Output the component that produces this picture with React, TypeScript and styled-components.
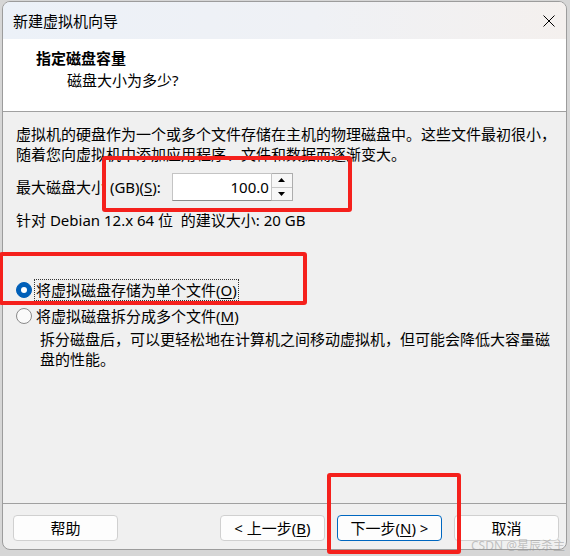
import React from "react";
import styled, { createGlobalStyle } from "styled-components";

const Global = createGlobalStyle`
  html, body { margin: 0; padding: 0; background: #d6d6d6; }
  body {
    font-family: "Noto Sans", "Noto Sans CJK SC", sans-serif;
    font-size: 15px;
    color: #000;
  }
  * { box-sizing: border-box; }
`;

const Stage = styled.div`
  position: relative;
  width: 570px;
  height: 556px;
  padding: 1px 0 0 2px;
  overflow: hidden;
`;

const Window = styled.div`
  width: 565px;
  height: 549px;
  border: 1px solid #9c9c9c;
  border-radius: 8px;
  background: #f0f0f0;
  display: flex;
  flex-direction: column;
  overflow: hidden;
`;

const TitleBar = styled.div`
  height: 37px;
  flex: none;
  display: flex;
  align-items: center;
  justify-content: space-between;
  padding: 0 11px 0 10px;
  background: linear-gradient(90deg, #ecf1f8 0%, #eff1f5 55%, #f4f0ee 100%);
`;

const TitleText = styled.div`
  font-size: 15px;
  line-height: 20px;
  color: #000;
`;

const CloseIcon = styled.svg`
  width: 12px;
  height: 12px;
  display: block;
`;

const Header = styled.div`
  height: 73px;
  flex: none;
  background: #fff;
  border-bottom: 1px solid #a0a0a0;
  padding: 9px 0 0 33px;
  display: flex;
  flex-direction: column;
  gap: 2px;
`;

const HeaderTitle = styled.div`
  font-weight: 700;
  font-size: 15px;
  line-height: 20px;
`;

const HeaderSub = styled.div`
  font-size: 15px;
  line-height: 20px;
  padding-left: 31px;
`;

const Body = styled.div`
  flex: 1;
  padding: 12px 0 0 13px;
  display: flex;
  flex-direction: column;
`;

const Para = styled.div<{ $indent?: number }>`
  font-size: 15px;
  line-height: 20px;
  padding-left: ${(p) => p.$indent ?? 0}px;
  width: ${(p) => 560 - (p.$indent ?? 0)}px;
  white-space: pre-line;
`;

const SizeRow = styled.div`
  margin-top: 9px;
  height: 28px;
  display: flex;
  align-items: center;
  gap: 11px;
  line-height: 20px;
`;

const Spin = styled.div`
  display: flex;
  height: 28px;
`;

const SpinInput = styled.div`
  width: 100px;
  height: 28px;
  background: #fff;
  border: 1px solid #c4c4c4;
  border-bottom-color: #8c8c8c;
  display: flex;
  align-items: center;
  justify-content: flex-end;
  padding-right: 2px;
  font-size: 15px;
`;

const SpinButtons = styled.div`
  width: 21px;
  height: 28px;
  border: 1px solid #adadad;
  border-left: none;
  display: flex;
  flex-direction: column;
  background: #f7f7f7;
`;

const SpinBtn = styled.div<{ $down?: boolean }>`
  flex: 1;
  display: flex;
  align-items: center;
  justify-content: center;
  border-top: ${(p) => (p.$down ? "1px solid #c8c8c8" : "none")};
`;

const Recommend = styled.div`
  margin-top: 9px;
  line-height: 20px;
  white-space: pre;
`;

const RadioGroup = styled.div`
  margin-top: 47px;
  display: flex;
  flex-direction: column;
`;

const RadioRow = styled.div`
  height: 26px;
  display: flex;
  align-items: center;
`;

const RadioDot = styled.span<{ $checked?: boolean }>`
  width: 16px;
  height: 16px;
  border-radius: 50%;
  flex: none;
  display: flex;
  align-items: center;
  justify-content: center;
  background: ${(p) => (p.$checked ? "#005fb8" : "#fafafa")};
  border: 1px solid ${(p) => (p.$checked ? "#005fb8" : "#8a8a8a")};
  &::after {
    content: "";
    display: ${(p) => (p.$checked ? "block" : "none")};
    width: 6px;
    height: 6px;
    border-radius: 50%;
    background: #fff;
  }
`;

const RadioLabel = styled.span<{ $focused?: boolean }>`
  margin-left: 2px;
  padding: 0 1px 0 1px;
  line-height: 20px;
  border: 1px dotted ${(p) => (p.$focused ? "#333" : "transparent")};
`;

const Mn = styled.span`
  text-decoration: underline;
  text-underline-offset: 2px;
`;

const Footer = styled.div`
  flex: none;
  height: 46px;
  border-top: 1px solid #a0a0a0;
  padding: 11px 7px 0 10px;
  display: flex;
  align-items: flex-start;
  gap: 12px;
`;

const Spacer = styled.div`
  flex: 1;
`;

const Button = styled.div<{ $primary?: boolean }>`
  width: 105px;
  height: 26px;
  border-radius: 4px;
  background: #fdfdfd;
  border: 1px solid ${(p) => (p.$primary ? "#0067c0" : "#d0d0d0")};
  display: flex;
  align-items: center;
  justify-content: center;
  font-size: 15px;
  line-height: 20px;
`;

const Mark = styled.div<{ $x: number; $y: number; $w: number; $h: number }>`
  position: absolute;
  left: ${(p) => p.$x}px;
  top: ${(p) => p.$y}px;
  width: ${(p) => p.$w}px;
  height: ${(p) => p.$h}px;
  border: 4px solid #f5201c;
  border-radius: 3px;
  pointer-events: none;
`;

const Watermark = styled.div`
  position: absolute;
  right: 5px;
  bottom: 3px;
  font-size: 12px;
  line-height: 14px;
  color: rgba(150, 150, 150, 0.55);
  font-family: "Noto Sans", "Noto Sans CJK SC", sans-serif;
`;

const Triangle = ({ down }: { down?: boolean }) => (
  <svg width="7" height="4" viewBox="0 0 7 4">
    {down ? <polygon points="0,0 7,0 3.5,4" fill="#000" /> : <polygon points="0,4 7,4 3.5,0" fill="#000" />}
  </svg>
);

export default function App() {
  return (
    <>
      <Global />
      <Stage>
        <Window>
          <TitleBar>
            <TitleText>新建虚拟机向导</TitleText>
            <CloseIcon viewBox="0 0 12 12">
              <path d="M0.5 0.5 L11.5 11.5 M11.5 0.5 L0.5 11.5" stroke="#000" strokeWidth="1" />
            </CloseIcon>
          </TitleBar>
          <Header>
            <HeaderTitle>指定磁盘容量</HeaderTitle>
            <HeaderSub>磁盘大小为多少?</HeaderSub>
          </Header>
          <Body>
            <Para>
              {"虚拟机的硬盘作为一个或多个文件存储在主机的物理磁盘中。这些文件最初很小，\n随着您向虚拟机中添加应用程序、文件和数据而逐渐变大。"}
            </Para>
            <SizeRow>
              <span>
                最大磁盘大小 (GB)(<Mn>S</Mn>):
              </span>
              <Spin>
                <SpinInput>100.0</SpinInput>
                <SpinButtons>
                  <SpinBtn>
                    <Triangle />
                  </SpinBtn>
                  <SpinBtn $down>
                    <Triangle down />
                  </SpinBtn>
                </SpinButtons>
              </Spin>
            </SizeRow>
            <Recommend>针对 Debian 12.x 64 位  的建议大小: 20 GB</Recommend>
            <RadioGroup>
              <RadioRow>
                <RadioDot $checked />
                <RadioLabel $focused>
                  将虚拟磁盘存储为单个文件(<Mn>O</Mn>)
                </RadioLabel>
              </RadioRow>
              <RadioRow>
                <RadioDot />
                <RadioLabel>
                  将虚拟磁盘拆分成多个文件(<Mn>M</Mn>)
                </RadioLabel>
              </RadioRow>
            </RadioGroup>
            <Para $indent={24}>
              {"拆分磁盘后，可以更轻松地在计算机之间移动虚拟机，但可能会降低大容量磁\n盘的性能。"}
            </Para>
          </Body>
          <Footer>
            <Button>帮助</Button>
            <Spacer />
            <Button>
              &lt; 上一步(<Mn>B</Mn>)
            </Button>
            <Button $primary>
              下一步(<Mn>N</Mn>) &gt;
            </Button>
            <Button>取消</Button>
          </Footer>
        </Window>
        <Mark $x={102} $y={156} $w={250} $h={56} />
        <Mark $x={-1} $y={252} $w={308} $h={53} />
        <Mark $x={327} $y={473} $w={134} $h={81} />
        <Watermark>CSDN @星辰杀主</Watermark>
      </Stage>
    </>
  );
}
